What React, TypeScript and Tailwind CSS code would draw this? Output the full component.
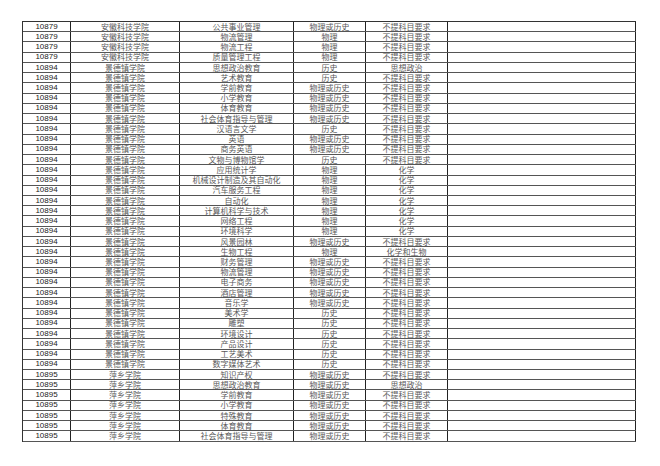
import type React from 'react';

type Row = [string, string, string, string, string];

const A = '安徽科技学院';
const J = '景德镇学院';
const P = '萍乡学院';
const NONE = '不提科目要求';
const WL = '物理或历史';

const rows: Row[] = [
  ['10879', A, '公共事业管理', WL, NONE],
  ['10879', A, '物流管理', '物理', NONE],
  ['10879', A, '物流工程', '物理', NONE],
  ['10879', A, '质量管理工程', '物理', NONE],
  ['10894', J, '思想政治教育', '历史', '思想政治'],
  ['10894', J, '艺术教育', '历史', NONE],
  ['10894', J, '学前教育', WL, NONE],
  ['10894', J, '小学教育', WL, NONE],
  ['10894', J, '体育教育', WL, NONE],
  ['10894', J, '社会体育指导与管理', WL, NONE],
  ['10894', J, '汉语言文学', '历史', NONE],
  ['10894', J, '英语', WL, NONE],
  ['10894', J, '商务英语', WL, NONE],
  ['10894', J, '文物与博物馆学', '历史', NONE],
  ['10894', J, '应用统计学', '物理', '化学'],
  ['10894', J, '机械设计制造及其自动化', '物理', '化学'],
  ['10894', J, '汽车服务工程', '物理', '化学'],
  ['10894', J, '自动化', '物理', '化学'],
  ['10894', J, '计算机科学与技术', '物理', '化学'],
  ['10894', J, '网络工程', '物理', '化学'],
  ['10894', J, '环境科学', '物理', '化学'],
  ['10894', J, '风景园林', WL, NONE],
  ['10894', J, '生物工程', '物理', '化学和生物'],
  ['10894', J, '财务管理', WL, NONE],
  ['10894', J, '物流管理', WL, NONE],
  ['10894', J, '电子商务', WL, NONE],
  ['10894', J, '酒店管理', WL, NONE],
  ['10894', J, '音乐学', WL, NONE],
  ['10894', J, '美术学', '历史', NONE],
  ['10894', J, '雕塑', '历史', NONE],
  ['10894', J, '环境设计', '历史', NONE],
  ['10894', J, '产品设计', '历史', NONE],
  ['10894', J, '工艺美术', '历史', NONE],
  ['10894', J, '数字媒体艺术', '历史', NONE],
  ['10895', P, '知识产权', WL, NONE],
  ['10895', P, '思想政治教育', WL, '思想政治'],
  ['10895', P, '学前教育', WL, NONE],
  ['10895', P, '小学教育', WL, NONE],
  ['10895', P, '特殊教育', WL, NONE],
  ['10895', P, '体育教育', WL, NONE],
  ['10895', P, '社会体育指导与管理', WL, NONE],
];

const cjk = "font-['Noto_Sans_CJK_SC',sans-serif] text-[8px] text-[#5a5a5a]";

export default function App(): React.ReactElement {
  return (
    <div className="w-[660px] h-[466px] bg-white pt-[21px] pl-[22px]">
      <div className="w-[614px] border-t border-l border-[#333]">
        {rows.map((r, i) => (
          <div
            key={i}
            className="flex h-[10.24px] border-b border-[#555] leading-none"
          >
            <div className="w-[48px] border-r border-[#222] flex items-center justify-center font-['Liberation_Sans',sans-serif] text-[8px] text-[#222]">
              {r[0]}
            </div>
            <div className={`w-[109px] border-r border-[#222] flex items-center justify-center ${cjk}`}>
              {r[1]}
            </div>
            <div className={`w-[114px] border-r border-[#222] flex items-center justify-center ${cjk}`}>
              {r[2]}
            </div>
            <div className={`w-[72px] border-r border-[#222] flex items-center justify-center ${cjk}`}>
              {r[3]}
            </div>
            <div className={`w-[82px] border-r border-[#222] flex items-center justify-center ${cjk}`}>
              {r[4]}
            </div>
            <div className="w-[188px] border-r border-[#222]" />
          </div>
        ))}
      </div>
    </div>
  );
}
